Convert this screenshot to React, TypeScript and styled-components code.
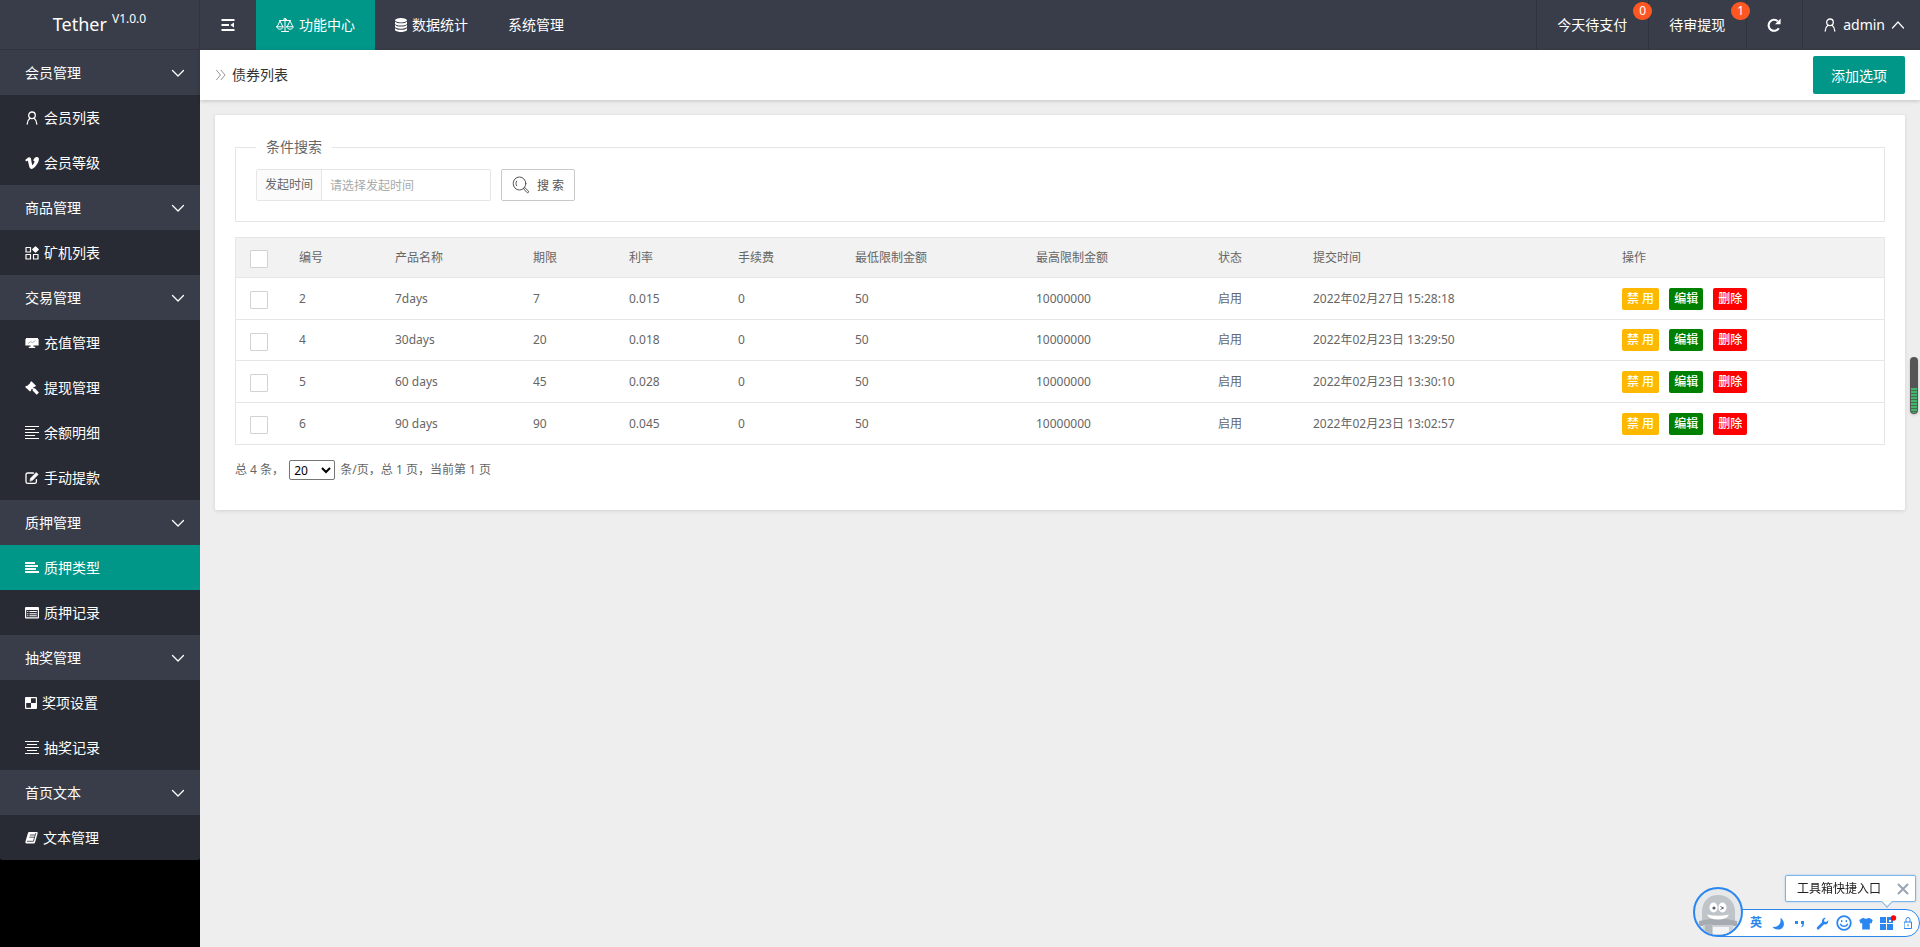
import React from "react";
import styled, { createGlobalStyle } from "styled-components";

const GlobalStyle = createGlobalStyle`
  *, *::before, *::after { box-sizing: border-box; }
  html, body { margin: 0; padding: 0; }
  body {
    background: #eee;
    color: #666;
    font: 14px/20px "Noto Sans", "Noto Sans CJK SC", sans-serif;
  }
  button, input, select { font-family: inherit; }
  a { color: inherit; text-decoration: none; }
`;

/* ---------- layout ---------- */

const Page = styled.div`
  display: flex;
  flex-direction: column;
  min-height: 100vh;
`;

const TopBar = styled.header`
  display: flex;
  height: 50px;
  background: #393d49;
  color: #fff;
`;

const Body = styled.div`
  display: flex;
  flex: 1;
`;

const Main = styled.main`
  flex: 1;
  min-width: 0;
`;

/* ---------- top bar ---------- */

const Logo = styled.a`
  display: flex;
  justify-content: center;
  gap: 5px;
  width: 200px;
  border-right: 1px solid #32353f;
  border-bottom: 1px solid #30333d;
  font-size: 18px;
  line-height: 48px;
`;

const Version = styled.sup`
  font-size: 12px;
  line-height: 38px;
  vertical-align: baseline;
`;

const TopNav = styled.nav`
  display: flex;
  flex: 1;
`;

const MenuToggle = styled.button`
  display: flex;
  align-items: center;
  justify-content: center;
  width: 56px;
  padding: 0;
  border: 0;
  background: none;
  color: #fff;
`;

const TopLink = styled.a<{ $active?: boolean }>`
  display: flex;
  align-items: center;
  gap: 5px;
  padding: 0 20px;
  background: ${(p) => (p.$active ? "#009688" : "transparent")};
`;

const TopTools = styled.div`
  display: flex;
`;

const Tool = styled.a`
  position: relative;
  display: flex;
  align-items: center;
  gap: 8px;
  padding: 0 21px 0 20px;
  border-left: 1px solid #30333d;
`;

const UserTool = styled(Tool)`
  gap: 6px;
  padding-right: 15px;
`;

const Badge = styled.span`
  position: absolute;
  top: 2px;
  right: -4px;
  z-index: 1;
  min-width: 19px;
  padding: 0 6px;
  border-radius: 9px;
  background: #ff5722;
  font-size: 12px;
  line-height: 18px;
  text-align: center;
`;

/* ---------- side menu ---------- */

const Side = styled.nav`
  width: 200px;
  flex: none;
  background: #000;
`;

const SideList = styled.ul`
  margin: 0;
  padding: 0;
  list-style: none;
  background: #282b33;
  border-radius: 0 0 2px 2px;
  overflow: hidden;
  color: #fff;
`;

const GroupLink = styled.a`
  display: flex;
  align-items: center;
  justify-content: space-between;
  height: 45px;
  padding: 0 15px 0 25px;
  background: #393d49;
`;

const ItemLink = styled.a<{ $active?: boolean }>`
  display: flex;
  align-items: center;
  gap: 5px;
  height: 45px;
  padding-left: 25px;
  background: ${(p) => (p.$active ? "#009688" : "transparent")};
`;

/* ---------- content ---------- */

const TitleBar = styled.div`
  display: flex;
  align-items: center;
  gap: 5px;
  height: 50px;
  padding: 0 15px;
  background: #fff;
  box-shadow: 0 1px 4px rgba(0, 0, 0, 0.18);
  color: #999;
`;

const Title = styled.h1`
  flex: 1;
  margin: 0;
  color: #333;
  font-size: 14px;
  font-weight: 400;
`;

const AddButton = styled.button`
  height: 38px;
  padding: 0 18px;
  border: 0;
  border-radius: 2px;
  background: #009688;
  color: #fff;
  font-size: 14px;
`;

const Card = styled.section`
  margin: 15px;
  padding: 19px 20px 30px;
  border-radius: 2px;
  background: #fff;
  box-shadow: 0 1px 4px rgba(0, 0, 0, 0.12);
  font-size: 12px;
`;

const Search = styled.fieldset`
  margin: 0 0 15px;
  padding: 9px 20px 20px;
  border: 1px solid #e6e6e6;
`;

const Legend = styled.legend`
  padding: 0 10px;
  font-size: 14px;
  line-height: 26px;
`;

const SearchRow = styled.div`
  display: flex;
  gap: 10px;
`;

const Field = styled.div`
  display: flex;
  width: 235px;
  height: 32px;
  border: 1px solid #e6e6e6;
  border-radius: 2px;
`;

const FieldLabel = styled.label`
  padding: 0 8px;
  border-right: 1px solid #e6e6e6;
  background: #fbfbfb;
  line-height: 30px;
`;

const FieldInput = styled.input`
  flex: 1;
  min-width: 0;
  padding: 0 8px;
  border: 0;
  background: none;
  font-size: 12px;
  &::placeholder { color: #aaa; }
`;

const SearchButton = styled.button`
  display: flex;
  align-items: center;
  gap: 7px;
  height: 32px;
  padding: 0 10px;
  border: 1px solid #c9c9c9;
  border-radius: 2px;
  background: #fff;
  color: #555;
  font-size: 12px;
`;

const Grid = styled.table`
  width: 100%;
  table-layout: fixed;
  border-collapse: separate;
  border-spacing: 0;
  border: 1px solid #e6e6e6;
  border-bottom: 0;
  th, td {
    padding: 0 15px 0 14px;
    border-bottom: 1px solid #e6e6e6;
    font-weight: 400;
    text-align: left;
    white-space: nowrap;
  }
  th { height: 40px; background: #f2f2f2; }
  td { height: 42px; }
  tbody tr:nth-child(2) td { height: 41px; }
`;

const Check = styled.input`
  display: block;
  appearance: none;
  width: 18px;
  height: 18px;
  margin: 3px 0 0;
  border: 1px solid #d2d2d2;
  border-radius: 1px;
  background: #fff;
`;

const Actions = styled.div`
  display: flex;
  gap: 10px;
`;

const ActionButton = styled.button<{ $color: string }>`
  height: 22px;
  padding: 0 5px;
  border: 0;
  border-radius: 2px;
  background: ${(p) => p.$color};
  color: #fff;
  font-size: 12px;
  font-weight: 500;
  line-height: 22px;
`;

const Pager = styled.div`
  margin-top: 15px;
  line-height: 20px;
`;

const PageSize = styled.select`
  width: 46px;
  height: 20px;
  margin: 0 2px;
  border: 1px solid #767676;
  border-radius: 2px;
  background: #fff;
  color: #000;
  font-size: 12px;
  vertical-align: top;
`;

/* ---------- floating widgets ---------- */

const Gauge = styled.div`
  position: fixed;
  top: 357px;
  right: 2px;
  display: flex;
  align-items: flex-end;
  width: 8px;
  height: 57px;
  padding: 1px;
  border-radius: 4px;
  background: #555;
  box-shadow: 0 1px 3px rgba(0, 0, 0, 0.2);
`;

const GaugeLevel = styled.div`
  width: 6px;
  height: 25px;
  border-radius: 0 0 3px 3px;
  background: repeating-linear-gradient(#3fb768 0 2px, #4a6b55 2px 3px);
`;

const Ime = styled.div`
  position: fixed;
  right: 0;
  bottom: 10px;
  display: flex;
  align-items: flex-end;
  color: #2b87f0;
`;

const Mascot = styled.div`
  z-index: 1;
  width: 50px;
  height: 50px;
  margin-right: -25px;
  border: 2px solid #2b87f0;
  border-radius: 50%;
  background: #e6e8ea;
  overflow: hidden;
`;

const ImeBar = styled.div`
  display: grid;
  grid-template-columns: repeat(7, 22px) 18px;
  align-items: center;
  justify-items: center;
  width: 202px;
  height: 28px;
  padding-left: 26px;
  border: 1px solid #2b87f0;
  border-radius: 0 14px 14px 0;
  background: #fff;
  font-size: 12px;
`;

const ImeTip = styled.div`
  position: fixed;
  right: 4px;
  bottom: 45px;
  display: flex;
  align-items: center;
  justify-content: space-between;
  width: 131px;
  height: 27px;
  padding: 0 6px 0 11px;
  border: 1px solid #7db4ea;
  border-radius: 2px;
  background: #fff;
  box-shadow: 0 0 2px rgba(43, 135, 240, 0.4);
  color: #222;
  font-size: 12px;
  &::after {
    content: "";
    position: absolute;
    right: 24px;
    bottom: -5px;
    width: 8px;
    height: 8px;
    border: solid #7db4ea;
    border-width: 0 1px 1px 0;
    background: #fff;
    transform: rotate(45deg);
  }
`;

const TipClose = styled.button`
  display: flex;
  padding: 0;
  border: 0;
  background: none;
  color: #98a4b3;
`;

/* ---------- icons ---------- */

type IconProps = { w?: number; h?: number; sw?: number; vb?: string; children?: React.ReactNode };

const Line = ({ w = 14, h = 14, sw = 1.2, vb, children }: IconProps) => (
  <svg width={w} height={h} viewBox={vb || `0 0 ${w} ${h}`} fill="none" stroke="currentColor"
    strokeWidth={sw} strokeLinecap="round" strokeLinejoin="round" aria-hidden="true">{children}</svg>
);
const Solid = ({ w = 14, h = 14, vb, children }: IconProps) => (
  <svg width={w} height={h} viewBox={vb || `0 0 ${w} ${h}`} fill="currentColor" aria-hidden="true">{children}</svg>
);

const icons = {
  shrink: <Solid><path d="M.5 1h13v2H.5zM.5 6h7.500v2H.5zM.5 11h13v2H.5zM13 4.600v4.800L9.300 7z" /></Solid>,
  scale: (
    <Line w={18} h={16} sw={1}>
      <path d="M9 2.500v11.500M3.500 3.500h4.300M10.200 3.500h4.300M5.500 14.500h7M4 4 1.200 9.600M4 4l2.800 5.600M14 4l-2.800 5.600M14 4l2.800 5.600" />
      <path d="M.8 9.800h6.400c-.3 1.600-1.600 2.400-3.200 2.400S1.100 11.400.8 9.800zM10.800 9.800h6.400c-.3 1.600-1.600 2.400-3.200 2.400s-2.900-.8-3.200-2.400z" />
      <circle cx="9" cy="2.500" r="1.200" />
    </Line>
  ),
  database: (
    <Solid w={12} h={14}>
      <ellipse cx="6" cy="2.200" rx="6" ry="2.200" />
      <path d="M0 3.400c1 1.400 3 1.800 6 1.800s5-.4 6-1.800v2c0 1.300-2.700 2.200-6 2.200S0 6.700 0 5.400z" />
      <path d="M0 6.700c1 1.400 3 1.800 6 1.800s5-.4 6-1.800v1.900c0 1.300-2.700 2.200-6 2.200S0 9.900 0 8.600z" />
      <path d="M0 9.900c1 1.400 3 1.800 6 1.800s5-.4 6-1.800v1.900C12 13.100 9.300 14 6 14s-6-.9-6-2.200z" />
    </Solid>
  ),
  refresh: (
    <svg width="14" height="14" viewBox="0 0 14 14" fill="none" aria-hidden="true">
      <path d="M11.800 10.200A5.500 5.500 0 1 1 10.800 3.200" stroke="currentColor" strokeWidth="2.100" />
      <path d="M13.600.6v5.600H8z" fill="currentColor" />
    </svg>
  ),
  user: <Line w={14} h={14} sw={1.300}><circle cx="7" cy="4.300" r="3.300" /><path d="M4.900 7.200C3.200 8.400 2.400 10.200 2.200 13M9.100 7.200c1.700 1.200 2.500 3 2.700 5.800" /></Line>,
  up: <Line w={14} h={14}><path d="m1.500 10 5.500-6 5.500 6" /></Line>,
  down: <Line w={14} h={14} sw={1.300}><path d="M1.500 4.500 7 10l5.500-5.500" /></Line>,
  vimeo: <Solid><path d="M.3 3.900C1.700 2.700 3 1.400 4 1.300c1.200-.1 1.900.7 2.200 2.400.3 1.800.7 5.300 1.400 5.300.5 0 1.900-2.300 1.900-3.400.1-.9-.7-.9-1.400-.6C8.800 2.400 10.200 1 12 1.100c1.400.1 2 .9 1.900 2.700-.2 3.200-4.800 9.200-7.400 9.200-1.800 0-2.200-2-2.700-4.200-.5-2.300-.7-4.100-1.300-4.100-.3 0-.8.3-1.500.8z" /></Solid>,
  blocks: (
    <Line sw={1.200}>
      <path d="M1 1.500h4.500V6H1zM1 8.500h4.500V13H1zM8.500 8.500H13V13H8.500z" />
      <path d="m10.500.8 2.700 2.700-2.700 2.700-2.700-2.700z" fill="currentColor" />
    </Line>
  ),
  board: (
    <Solid>
      <path d="M1 2h12v1h.6v6.500H8.500v1.200h1.700v1.300H3.800v-1.300h1.700V9.500H.4V3H1z" />
      <path d="M3 7.500 5.600 5.700l1.700.9 3.200-2" stroke="#8c8f95" strokeWidth=".7" fill="none" />
    </Solid>
  ),
  gavel: <Solid><path d="m6.500.2 4.500 4.500-1.200 1.200-.7-.2-1 1.100.9.800.9-.4 4 4.200-2.200 2.300-4.200-4.300.4-.9-.8-.8-1.100 1 .2.700L5 10.600.1 6l1.200-1.200.8.200 3.200-3-.2-.7z" /></Solid>,
  left: <Line sw={1}><path d="M0 .5h14M0 3.500h10M0 6.500h14M0 9.500h10M0 12.500h14" strokeLinecap="butt" /></Line>,
  center: <Line sw={1}><path d="M0 .5h14M2 3.500h10M0 6.500h14M2 9.500h10M0 12.500h14" strokeLinecap="butt" /></Line>,
  alignBold: <Solid><path d="M0 1h10v2H0zM0 4h13v2H0zM0 7h11v2H0zM0 10h14v2H0z" /></Solid>,
  edit: (
    <Line sw={1.300}>
      <path d="M8.500 2H2.700Q1 2 1 3.700v7Q1 12.400 2.700 12.400h7q1.700 0 1.700-1.700V8.600" />
      <path d="m5 9.800.5-2.500L11.200 1.500l2 2-5.700 5.800z" fill="currentColor" strokeWidth=".6" />
    </Line>
  ),
  listAlt: <Solid><path fillRule="evenodd" d="M1 1h12q1 0 1 1v9.500q0 1-1 1H1q-1 0-1-1V2q0-1 1-1zm.2 3v7.300h11.600V4zM2.200 5h1.200v1H2.200zm2.200 0h7.400v1H4.400zM2.200 7.200h1.200v1H2.200zm2.200 0h7.400v1H4.400zM2.200 9.300h1.200v1H2.200zm2.200 0h7.400v1H4.400z" /></Solid>,
  checker: <Solid w={12} h={14}><path fillRule="evenodd" d="M1 1h10q1 0 1 1v10q0 1-1 1H1q-1 0-1-1V2q0-1 1-1zm5 1.200v4.800h4.800V2.200zM1.200 7v4.800H6V7z" /></Solid>,
  book: (
    <Solid w={13}>
      <path d="M4.200 1h7.800q1 .3.700 1.300l-2.600 9q-.3 1.200-1.400 1.200H1.500Q0 12.300.4 10.800L2.900 2.200Q3.200 1 4.200 1z" />
      <path d="M4.900 4h5M4.300 6.200h5M2 10.300h6.400L10.800 2" stroke="#282b33" strokeWidth=".8" fill="none" />
    </Solid>
  ),
  crumb: <Line w={12} h={14} sw={1}><path d="m1.500 2.200 4 4.800-4 4.800M6 2.200 10 7l-4 4.800" /></Line>,
  lens: <Line w={18} h={18} sw={1}><ellipse cx="7.500" cy="7.500" rx="6.300" ry="6.500" /><path d="M4.600 5.200c-.9 1.400-.9 3.100 0 4.500M11.800 12.400l1-.9 3.700 3.700q.4.900-.2 1.300-.7.500-1.300 0z" /></Line>,
};

/* ---------- data ---------- */

type IconName = keyof typeof icons;
type Group = { title: string; items: { label: string; icon: IconName; active?: boolean }[] };

const menu: Group[] = [
  { title: "会员管理", items: [{ label: "会员列表", icon: "user" }, { label: "会员等级", icon: "vimeo" }] },
  { title: "商品管理", items: [{ label: "矿机列表", icon: "blocks" }] },
  {
    title: "交易管理",
    items: [
      { label: "充值管理", icon: "board" },
      { label: "提现管理", icon: "gavel" },
      { label: "余额明细", icon: "left" },
      { label: "手动提款", icon: "edit" },
    ],
  },
  { title: "质押管理", items: [{ label: "质押类型", icon: "alignBold", active: true }, { label: "质押记录", icon: "listAlt" }] },
  { title: "抽奖管理", items: [{ label: "奖项设置", icon: "checker" }, { label: "抽奖记录", icon: "center" }] },
  { title: "首页文本", items: [{ label: "文本管理", icon: "book" }] },
];

const columns = [
  { title: "编号", width: 96 },
  { title: "产品名称", width: 138 },
  { title: "期限", width: 96 },
  { title: "利率", width: 109 },
  { title: "手续费", width: 117 },
  { title: "最低限制金额", width: 181 },
  { title: "最高限制金额", width: 182 },
  { title: "状态", width: 95 },
  { title: "提交时间", width: 309 },
  { title: "操作", width: 276 },
];

const rows = [
  ["2", "7days", "7", "0.015", "0", "50", "10000000", "启用", "2022年02月27日 15:28:18"],
  ["4", "30days", "20", "0.018", "0", "50", "10000000", "启用", "2022年02月23日 13:29:50"],
  ["5", "60 days", "45", "0.028", "0", "50", "10000000", "启用", "2022年02月23日 13:30:10"],
  ["6", "90 days", "90", "0.045", "0", "50", "10000000", "启用", "2022年02月23日 13:02:57"],
];

/* ---------- parts ---------- */

const SideMenu = () => (
  <Side>
    <SideList>
      {menu.map((group) => (
        <React.Fragment key={group.title}>
          <li><GroupLink href="#">{group.title}{icons.down}</GroupLink></li>
          {group.items.map((item) => (
            <li key={item.label}>
              <ItemLink href="#" $active={item.active}>{icons[item.icon]}{item.label}</ItemLink>
            </li>
          ))}
        </React.Fragment>
      ))}
    </SideList>
  </Side>
);

const BondTable = () => (
  <Grid>
    <colgroup>
      <col width={49} />
      {columns.map((c) => <col key={c.title} width={c.width} />)}
    </colgroup>
    <thead>
      <tr>
        <th><Check type="checkbox" aria-label="全选" /></th>
        {columns.map((c) => <th key={c.title}>{c.title}</th>)}
      </tr>
    </thead>
    <tbody>
      {rows.map((row) => (
        <tr key={row[0]}>
          <td><Check type="checkbox" aria-label={row[1]} /></td>
          {row.map((cell, i) => <td key={i}>{cell}</td>)}
          <td>
            <Actions>
              <ActionButton $color="#ffb800">禁 用</ActionButton>
              <ActionButton $color="#008000">编辑</ActionButton>
              <ActionButton $color="#ff0000">删除</ActionButton>
            </Actions>
          </td>
        </tr>
      ))}
    </tbody>
  </Grid>
);

const InputMethod = () => (
  <>
    <ImeTip>
      工具箱快捷入口
      <TipClose aria-label="关闭"><Line w={12} h={12} sw={2}><path d="m1.500 1.500 9 9M10.500 1.500l-9 9" /></Line></TipClose>
    </ImeTip>
    <Ime>
      <Mascot>
        <svg width="46" height="46" viewBox="0 0 46 46" aria-hidden="true">
          <path d="M7 33V23C7 12 14 6 23 6s17 6 17 17v10z" fill="#bfc4c9" />
          <path d="M4 32q19-5 38 0v5H4z" fill="#a6abb1" />
          <path d="M8 36h30v10H8z" fill="#cdd0d4" />
          <path d="M10 35h7v11h-7z" fill="#b1b6bb" />
          <path d="M18 38h16v7H18z" fill="#f3f4f5" />
          <ellipse cx="18.500" cy="18.500" rx="4" ry="5" fill="#fff" />
          <ellipse cx="27.500" cy="18.500" rx="4" ry="5" fill="#fff" />
          <circle cx="19" cy="19" r="1.600" fill="#5c6167" />
          <path d="m25.500 17.500 3 1.500-3 1.500" stroke="#5c6167" fill="none" />
          <path d="M12 25.500q11 2.500 22 0-2 5-11 5t-11-5z" fill="#fff" />
        </svg>
      </Mascot>
      <ImeBar>
        <b>英</b>
        <Solid w={13} h={13}><path d="M8.500.8c5.500 4 4 11.200-2 11.700-2.700.2-4.800-.9-6-2.700C6 10.600 9.500 6.500 8.500.8z" /></Solid>
        <Solid w={12} h={12}><path d="M1 4h3v3H1zM7 4h3v3Q10 9.500 7.500 10.500V9.300Q8.500 8.500 8.400 7H7z" /></Solid>
        <Solid w={13} h={13}><path d="M12.300 3.300c.5 2.700-1.800 4.700-4.200 4L3 12.300c-1.600.8-2.700-.6-2-2l5-5C5.500 2.600 7.400.4 10 .8L8 2.900l.4 1.800 1.800.4z" /></Solid>
        <Line w={16} h={16} sw={1.800}><circle cx="8" cy="8" r="6.800" /><path d="M4.500 9.300c1.500 2.700 5.500 2.700 7 0M5.700 5.700v.8M10.300 5.700v.8" strokeWidth="1.500" /></Line>
        <Solid w={14} h={13}><path d="M4 .8q3 2 6 0l3.700 2.300-1.200 3.400-1.700-.5v6.500H3.200V6l-1.700.5L.3 3.100z" /></Solid>
        <svg width="17" height="16" viewBox="0 0 17 16" aria-hidden="true">
          <path d="M0 2h6v6H0zM7 2h6v6H7zM0 9h6v6H0zM7 9h6v6H7z" fill="currentColor" />
          <path d="M9 5h2v2H9z" fill="#fff" />
          <circle cx="13.500" cy="3" r="2.700" fill="#f00" />
        </svg>
        <Line w={8} h={12} sw={1}><path d="M.5 5h7v6.500h-7zM2 5V2.500Q2 .5 4 .5t2 2V5M4 7.500v1.500" /></Line>
      </ImeBar>
    </Ime>
  </>
);

export default function App() {
  return (
    <Page>
      <GlobalStyle />
      <TopBar>
        <Logo href="#">Tether<Version>V1.0.0</Version></Logo>
        <TopNav>
          <MenuToggle aria-label="菜单">{icons.shrink}</MenuToggle>
          <TopLink href="#" $active>{icons.scale}功能中心</TopLink>
          <TopLink href="#">{icons.database}数据统计</TopLink>
          <TopLink href="#">系统管理</TopLink>
        </TopNav>
        <TopTools>
          <Tool href="#">今天待支付<Badge>0</Badge></Tool>
          <Tool href="#">待审提现<Badge>1</Badge></Tool>
          <Tool href="#" aria-label="刷新">{icons.refresh}</Tool>
          <UserTool href="#">{icons.user}admin{icons.up}</UserTool>
        </TopTools>
      </TopBar>
      <Body>
        <SideMenu />
        <Main>
          <TitleBar>
            {icons.crumb}
            <Title>债券列表</Title>
            <AddButton>添加选项</AddButton>
          </TitleBar>
          <Card>
            <Search>
              <Legend>条件搜索</Legend>
              <SearchRow>
                <Field>
                  <FieldLabel htmlFor="start-time">发起时间</FieldLabel>
                  <FieldInput id="start-time" placeholder="请选择发起时间" />
                </Field>
                <SearchButton>{icons.lens}搜 索</SearchButton>
              </SearchRow>
            </Search>
            <BondTable />
            <Pager>
              总 4 条，{" "}
              <PageSize aria-label="每页条数" defaultValue="20">
                <option>20</option>
                <option>50</option>
              </PageSize>
              {" "}条/页，总 1 页，当前第 1 页
            </Pager>
          </Card>
        </Main>
      </Body>
      <Gauge><GaugeLevel /></Gauge>
      <InputMethod />
    </Page>
  );
}
